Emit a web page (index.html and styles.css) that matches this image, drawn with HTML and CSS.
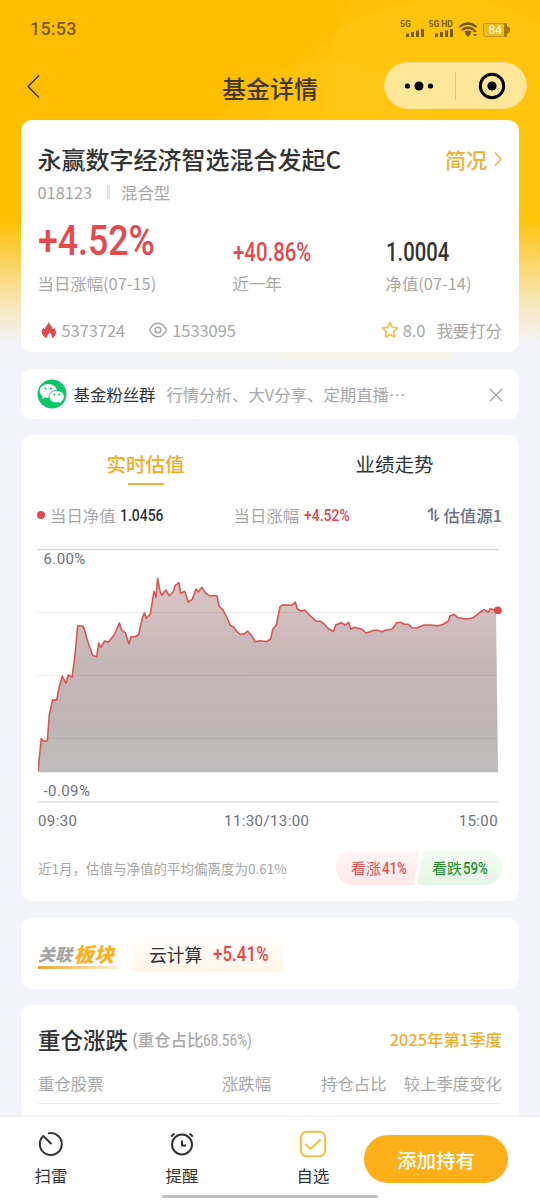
FILE: index.html
```html
<!DOCTYPE html>
<html lang="zh-CN">
<head>
  <meta charset="UTF-8">
  <meta name="viewport" content="width=device-width, initial-scale=1.0">
  <title>基金详情</title>
  <link rel="stylesheet" href="styles.css">
</head>
<body>
  <div class="page">
    <header class="status">
      <span class="clock">15:53</span>
      <svg class="status-icons" width="112" height="24" viewBox="0 0 112 24">
        <g fill="#765a08">
          <text class="net" x="0" y="8.500">5G</text>
          <text class="net" x="28.500" y="8.500">5G HD</text>
          <path d="M6 15.500h3v3.500h-3zM11 14h3v5h-3zM16 12.500h3v6.500h-3zM21 11h3v8h-3zM35 15.500h3v3.500h-3zM40 14h3v5h-3zM45 12.500h3v6.500h-3zM50 11h3v8h-3z"/>
          <path d="M65 15.500l3-2.500 3 2.500-3 3.500z"/>
          <path d="M73 14l2-2.500 2 2.500zM73 16h4l-2 2.500z"/>
          <rect class="battery" x="83.500" y="5.500" width="21" height="13" rx="2"/>
          <path class="battery-end" d="M104 5h2q1 0 1 1.500v1.500l3 2v4l-3 2v1.500q0 1.500-1 1.500h-2z"/>
        </g>
        <path class="wifi" d="M59.500 9q8.500-7 17 0M62 12q6-4.500 12 0M65 14.500q3-2 6 0"/>
        <text class="level" x="88.500" y="16.200">84</text>
      </svg>
    </header>
    <nav class="nav">
      <svg class="back" width="16" height="26" viewBox="0 0 16 26"><path d="M13 2.500L2 13.500l11 11"/></svg>
      <h1>基金详情</h1>
      <div class="capsule">
        <svg width="30" height="12" viewBox="0 0 30 12"><circle cx="3.500" cy="6" r="2.600"/><circle cx="15" cy="6" r="4.500"/><circle cx="26.500" cy="6" r="2.600"/></svg>
        <i></i>
        <svg width="28" height="28" viewBox="0 0 28 28"><circle class="ring" cx="14" cy="14" r="11.700"/><circle cx="14" cy="14" r="4.600"/></svg>
      </div>
    </nav>

    <section class="card fund">
      <div class="fund-title">
        <h2>永赢数字经济智选混合发起C</h2>
        <a>简况<svg width="10" height="16" viewBox="0 0 10 16"><path d="M2 1.500l6 6.500-6 6.500"/></svg></a>
      </div>
      <div class="fund-code"><span>018123</span><i></i><span>混合型</span></div>
      <div class="stats">
        <div><p class="big red"><b class="num">+4.52%</b></p><p>当日涨幅(07-15)</p></div>
        <div><p class="big red"><b class="num mid">+40.86%</b></p><p>近一年</p></div>
        <div><p class="big"><b class="num mid">1.0004</b></p><p>净值(07-14)</p></div>
      </div>
      <div class="counts">
        <svg class="fire" width="16" height="18" viewBox="0 0 16 18"><path d="M7.500.5C8.500 4 12 6 11.700 8.500c.8-.3 1.200-1 1.300-1.800 3 4 2.700 8.500-2.200 10.600.8-2.600-.7-4.800-2.600-6-.1 2-2.600 3.200-1.900 6C-.3 15-.5 9.500 2.800 6.500c0 1 .5 1.500 1.100 1.800C4 5 7.500 4 7.500.5z"/></svg>
        <span class="heat">5373724</span>
        <svg class="eye" width="18" height="16" viewBox="0 0 18 16"><path d="M.8 8C2.500 3.500 5.500 1.200 9 1.200s6.500 2.300 8.200 6.800c-1.700 4.500-4.700 6.800-8.200 6.800S2.500 12.500.8 8z"/><circle cx="9" cy="8" r="2.800"/></svg>
        <span class="views">1533095</span>
        <svg class="star" width="18" height="18" viewBox="0 0 18 18"><path d="M9 1.500l2.300 4.800 5.200.7-3.800 3.700.9 5.300L9 13.500 4.400 16l.9-5.300L1.500 7l5.200-.7z"/></svg>
        <span class="score">8.0</span>
        <span>我要打分</span>
      </div>
    </section>

    <section class="card group">
      <svg width="30" height="30" viewBox="0 0 30 30">
        <circle cx="15" cy="15" r="14.500" fill="#09c767"/>
        <path fill="#fff" d="M11.300 5C6.500 5 2.700 8.100 2.700 12c0 2.200 1.200 4.100 3 5.400l-.7 2.500 3-1.400c3.800 1.100 11-.4 11.900-6.500C19.900 8.100 16.100 5 11.300 5z"/>
        <path fill="#fff" stroke="#09c767" d="M19.800 11.500c-4.300 0-7.800 2.800-7.800 6.200s3.500 6.200 7.800 6.200c.9 0 1.800-.1 2.600-.4l2.700 1.400-.6-2.400c1.700-1.100 2.800-2.900 2.800-4.800 0-3.400-3.300-6.200-7.500-6.200z"/>
        <g fill="#09c767"><circle cx="8.400" cy="9.500" r="1.100"/><circle cx="14" cy="9.500" r="1.100"/><circle cx="17.400" cy="15.600" r="1"/><circle cx="22.200" cy="15.600" r="1"/></g>
      </svg>
      <strong>基金粉丝群</strong>
      <span>行情分析、大V分享、定期直播⋯</span>
      <svg class="close" width="14" height="14" viewBox="0 0 14 14"><path d="M1 1l12 12M13 1L1 13"/></svg>
    </section>

    <section class="card estimate">
      <div class="tabs"><span class="active">实时估值</span><span>业绩走势</span></div>
      <div class="legend">
        <i></i><span>当日净值</span><b class="num small">1.0456</b>
        <span class="rise">当日涨幅</span><b class="num small red">+4.52%</b>
        <a><svg width="13" height="16" viewBox="0 0 13 16"><path d="M1 5l4-3.500V13M8.500 2.500V14L12 10.500"/></svg>估值源1</a>
      </div>
      <svg class="chart" width="466" height="294" viewBox="0 0 466 294">
        <defs>
          <linearGradient id="fill" x1="0" y1="38" x2="0" y2="232" gradientUnits="userSpaceOnUse">
            <stop offset="0" stop-color="#8a4040" stop-opacity=".3"/>
            <stop offset=".45" stop-color="#6d4848" stop-opacity=".4"/>
            <stop offset=".75" stop-color="#6a5454" stop-opacity=".43"/>
            <stop offset="1" stop-color="#616161" stop-opacity=".42"/>
          </linearGradient>
        </defs>
        <path class="grid" d="M0 72.500h460M0 135.500h460M0 198.500h460M0 232.500h460"/>
        <path class="edge" d="M0 9.500h460M0 261.800h460"/>
        <path id="area" fill="url(#fill)"/>
        <polyline id="line"/>
        <circle cx="459.800" cy="70.300" r="3.900" fill="#e5484d"/>
        <text x="5.500" y="24">6.00%</text>
        <text x="5.500" y="255.500">-0.09%</text>
        <text x="0" y="285.500">09:30</text>
        <text x="228.700" y="285.500" text-anchor="middle">11:30/13:00</text>
        <text x="460" y="285.500" text-anchor="end">15:00</text>
      </svg>
      <div class="vote">
        <span>近1月，估值与净值的平均偏离度为0.61%</span>
        <div class="up">看涨<b class="num vote-num">41%</b></div>
        <div class="down">看跌<b class="num vote-num">59%</b></div>
      </div>
    </section>

    <section class="card sector">
      <div class="sector-name"><em>关联</em><em class="hot">板块</em></div>
      <div class="sector-tag">云计算<b class="num sector-num red">+5.41%</b></div>
    </section>

    <section class="card holdings">
      <div class="holdings-title">
        <h3>重仓涨跌</h3>
        <span>(重仓占比<b class="num ratio">68.56%)</b></span>
        <a>2025年第1季度</a>
      </div>
      <div class="holdings-head"><span>重仓股票</span><span>涨跌幅</span><span>持仓占比</span><span>较上季度变化</span></div>
    </section>
  </div>

  <footer class="bottom">
    <div class="item">
      <svg width="28" height="28" viewBox="0 0 28 28"><path d="M11 3.400A11 11 0 1 1 6.300 6L14.500 14"/></svg>
      <span>扫雷</span>
    </div>
    <div class="item">
      <svg width="28" height="28" viewBox="0 0 28 28"><circle cx="14" cy="14.500" r="10"/><path d="M14 10.500v5h4M3.300 6.800q1.200-2 3.200-3.200M24.700 6.800q-1.200-2-3.200-3.200"/></svg>
      <span>提醒</span>
    </div>
    <div class="item">
      <svg class="check" width="28" height="28" viewBox="0 0 28 28"><rect x="1.800" y="1.800" width="24.400" height="24.400" rx="6"/><path d="M6.500 14l5 5 10-9.500"/></svg>
      <span>自选</span>
    </div>
    <button>添加持有</button>
    <i class="home"></i>
  </footer>

  <script>
    const points = [
      [0,231],[3.3,198.5],[5,201],[9.3,201],[11.3,175],[14.7,159.7],[18.7,160],[21.3,146.7],[24.3,136],[28,143.5],
      [30.3,135],[34,137.3],[37,115],[39.7,85.7],[45.3,86.3],[50.3,103.3],[54.7,115.3],[58.7,116.7],[60.7,103],[62.7,107.3],
      [66.7,101],[70.3,102.3],[76.3,94.7],[81.3,83],[83.7,90.3],[87.3,92.7],[91,103.7],[93,96.7],[97,96.7],[100.7,94.7],
      [104,79],[106.3,72.7],[108.3,78.3],[112.3,74],[116,51.3],[118,57.3],[119.7,38.3],[121.7,50],[123.7,55.3],[127.7,50],
      [131.3,55.7],[135,52],[137.3,45.3],[141,42.7],[142.7,53.3],[146.7,51.3],[150.3,62],[154.3,59.3],[158,49],[160.3,52],
      [164,47.3],[167.7,53.3],[171.3,55.7],[179,55.7],[181,66],[185,70],[189.3,78.3],[192.3,85.3],[195.7,87.3],[198.7,91.3],
      [202,94],[206,94],[209.7,91],[213,95],[217.3,101.7],[221.3,100.7],[228.7,101.5],[232.7,99],[234.7,89.3],[238.3,85],
      [242,66.7],[245,64.7],[254,65.3],[257.3,62],[259.3,68.7],[263,71],[267,70],[272,75.7],[278.3,81.3],[282.7,81.3],
      [286.3,84],[290.3,88.7],[295.7,91.3],[297.7,85],[303,82.7],[307.3,85],[310.7,82.3],[312.7,89.3],[316.7,87.3],[324,89.3],
      [328,93],[336,90.3],[339.7,90.3],[343.7,91.7],[347.7,90.3],[354.3,89],[358.7,82.7],[362.3,82.3],[366.3,84.3],[370.3,84.3],
      [374,87.7],[378.7,88],[386,85],[393.3,85],[399.3,86],[405,84.3],[410.3,81.3],[412,76],[416,74.3],[419.7,77.7],
      [428.7,79],[435.3,77.7],[442,72.3],[446.3,69.7],[450.3,72.3],[452.3,68.7],[455.3,69.7],[458,70]
    ];
    document.getElementById('line').setAttribute('points', points.join(' '));
    document.getElementById('area').setAttribute('d', 'M' + points.join('L') + 'L460,232H0Z');
  </script>
</body>
</html>
```

FILE: styles.css
```css
* { box-sizing: border-box; }
body { margin: 0; width: 540px; height: 1200px; overflow: hidden; background: #f3f4fa; color: #333; font: 16.4px/24px "Noto Sans CJK SC", sans-serif; }
h1, h2, h3, p { margin: 0; font-weight: 500; }
svg { display: block; flex: none; }
svg path, svg polyline { stroke-linejoin: round; }
.page {
  height: 1117px; overflow: hidden; padding: 0 21px;
  background:
    linear-gradient(#f5f5e7, #f5f5e7) 283px 352px / 168px 7px no-repeat,
    linear-gradient(#f3f4ef, #f3f4ef) 158px 352px / 125px 7px no-repeat,
    linear-gradient(#f3f4fa00 220px, #f3f4fa66 265px, #f3f4facc 312px, #f3f4fa 346px),
    radial-gradient(circle at 445px 190px, #ffc91c55 191px, transparent 192px),
    radial-gradient(circle at 555px 100px, #ffc91c33 229px, transparent 230px),
    radial-gradient(circle at 330px 190px, #ffc91c33 130px, transparent 131px),
    #ffbf00;
}
.red { color: #e5484d; }

/* narrow figures */
.num { display: inline-block; font-family: Roboto, sans-serif; font-weight: 500; transform-origin: left center; transform: scaleX(.85); white-space: nowrap; }

.status { height: 58px; display: flex; justify-content: space-between; padding: 17px 7px 0 9px; }
.clock { font: 500 18px/24px Roboto, sans-serif; letter-spacing: .2px; color: #765a08; }
.status-icons { margin: 1px 0 0; }
.net { font: bold 8.5px Roboto, sans-serif; }
.level { font: 500 12px Roboto, sans-serif; fill: #fff6d8; }
.wifi { fill: none; stroke: #765a08; stroke-width: 2.2; }
.battery { fill: #f0b91c; stroke: #c09420; }
.battery-end { fill: #a37a0c; }
.nav { height: 62px; display: grid; grid-template-columns: 1fr auto 1fr; align-items: center; margin-right: -8px; padding-bottom: 7px; }
.back { margin-left: 5px; }
.back path { fill: none; stroke: #413413; stroke-width: 1.7; }
.nav h1 { font-size: 24px; line-height: 34px; padding: 4px 8px 0 0; color: #403718; }
.capsule { justify-self: end; width: 143px; height: 47px; border-radius: 24px; background: #ffe799; border: 1px solid #f8dd86; display: flex; align-items: center; padding: 0 19px; }
.capsule i { width: 1px; height: 28px; margin: 0 22px 0 21px; background: #dcc583; }
.ring { fill: none; stroke: #000; stroke-width: 3; }

.card { background: #fff; border-radius: 11px; margin-bottom: 16px; padding: 0 17px; }
.fund { height: 232px; margin-bottom: 17px; padding: 21px 17px 0 16.500px; color: #a7a7a7; }
.fund-title { display: flex; justify-content: space-between; line-height: 36px; }
.fund-title h2 { font-size: 24px; color: #333; white-space: nowrap; }
.fund-title a { display: flex; align-items: center; gap: 6px; font-size: 21px; font-weight: 500; color: #f0ae35; height: 35px; margin-right: -1px; }
.fund-title path { fill: none; stroke: #f0ae35; stroke-width: 1.3; }
.fund-code { display: flex; align-items: center; height: 24px; margin-top: 3px; }
.fund-code i { width: 3px; height: 14px; background: #e2e2e2; margin: 0 11px 0 15px; }
.stats { display: grid; grid-template-columns: 195px 153px 1fr; margin-top: 15px; white-space: nowrap; }
.stats p { font-weight: 400; }
.big { height: 52px; display: flex; align-items: flex-end; }
.big .num { font-size: 42px; line-height: 60px; }
.big .num.mid { font-size: 25px; line-height: 36px; transform: scaleX(.815); }
.stats > div:last-child .big { color: #333; }
.stats > div:last-child .num { transform: scaleX(.81); }
.counts { display: flex; align-items: center; margin-top: 23px; height: 24px; }
.fire { fill: #e5484d; margin: 0 5px 0 3px; }
.heat { margin-right: 24px; }
.eye { fill: none; stroke: #a7a7a7; stroke-width: 1.5; margin-right: 5px; }
.star { fill: none; stroke: #f7bd3d; stroke-width: 1.5; margin: 0 4px 0 auto; }
.score { margin-right: 11px; }

.group { height: 50px; display: flex; align-items: center; padding-left: 16px; }
.group strong { font-weight: 400; margin: 0 11px 0 6.500px; }
.group span { color: #a7a7a7; }
.close { margin: 2px -1px 0 auto; }
.close path { stroke: #a0a0a0; stroke-width: 1.2; }

.estimate { height: 466px; margin-bottom: 17px; padding-top: 13px; }
.tabs { display: grid; grid-template-columns: 1fr 1fr; margin: 0 -17px; text-align: center; font-size: 19.5px; line-height: 32px; height: 54px; }
.active { color: #f5ab23; font-weight: 500; }
.active::after { content: ""; display: block; width: 36px; height: 2px; background: #efb13b; margin: 3px auto 0; }
.legend { display: flex; align-items: center; height: 25px; margin-left: -1px; color: #a7a7a7; white-space: nowrap; }
.legend i { width: 8px; height: 8px; border-radius: 50%; background: #e5484d; margin-right: 5px; }
.legend .small { font-size: 17px; width: 46px; margin-left: 4px; transform: scaleX(.82); }
.legend .small:not(.red) { color: #333; }
.legend .small.red { margin-left: 5px; transform: scaleX(.82); }
.rise { margin-left: 68px; }
.legend a { display: flex; align-items: center; gap: 3px; margin-left: auto; color: #6d7386; font-weight: 500; }
.legend path { fill: none; stroke: #6d7386; stroke-width: 1.7; }
.chart { margin-top: 13px; }
.chart text { font: 15px Roboto, sans-serif; letter-spacing: .4px; fill: #6e7280; }
.grid { stroke: #ebebeb; }
.edge { stroke: #d8d8d8; stroke-width: 1.3; }
#line { fill: none; stroke: #d95555; stroke-width: 1.6; }
.vote { display: flex; align-items: center; height: 34px; margin-top: 17px; font-size: 13.5px; color: #a7a7a7; white-space: nowrap; }
.up, .down { width: 83px; height: 34px; font-size: 15px; display: flex; align-items: center; }
.up { margin-left: auto; padding-left: 15px; color: #dc5558; background: linear-gradient(#fff6f6, #ffe8e8); border-radius: 17px 3px 3px 17px; clip-path: polygon(0 0, 100% 0, 78px 100%, 0 100%); }
.down { width: 85px; margin-left: -2px; padding-left: 15px; color: #24912a; background: linear-gradient(#f4fbf4, #e5f4e6); border-radius: 3px 17px 17px 3px; clip-path: polygon(6px 0, 100% 0, 100% 100%, 0 100%); }
.vote-num { font-size: 17px; width: 30px; margin-left: 1px; transform: scaleX(.78); }

.sector { height: 71px; display: flex; align-items: center; }
.sector-name { width: 80px; height: 26px; margin: 4px 14px 0 0; display: flex; align-items: center; font-weight: 900; line-height: 22px; border-bottom: 3px solid; border-image: linear-gradient(90deg, #e9a52e, #fff3dc) 1; }
.sector-name em { font-size: 17px; color: #a5a5a5; }
.sector-name .hot { font-size: 20px; color: #f9b11e; margin-left: 2px; }
.sector-tag { width: 152px; height: 37px; padding-left: 17px; display: flex; align-items: center; font-size: 17.8px; background: linear-gradient(#fff, #fff6e6); border-radius: 5px; white-space: nowrap; }
.sector-num { font-size: 20px; margin-left: 11px; }

.holdings { height: 130px; padding-top: 17px; }
.holdings-title { display: flex; align-items: center; height: 34px; white-space: nowrap; }
.holdings-title h3 { font-size: 22.5px; }
.holdings-title span { margin-left: 4px; color: #a7a7a7; font-weight: 500; }
.ratio { font-size: 17px; font-weight: 400; transform: scaleX(.8); }
.holdings-title a { color: #f5ab2e; font-weight: 500; margin-left: auto; }
.holdings-head { display: flex; height: 48px; border-bottom: 1px solid #edeef4; line-height: 55px; color: #a7a7a7; }
.holdings-head span:nth-child(2) { margin: 0 50px 0 auto; }
.holdings-head span:nth-child(4) { margin-left: 17px; }

.bottom { position: relative; height: 83px; background: #fff; display: flex; padding: 0 31px 0 18px; box-shadow: 0 -1px 2px #e9eaf0; }
.item { width: 66px; margin-right: 65px; display: flex; flex-direction: column; align-items: center; padding-top: 13px; line-height: 34px; }
.item svg { fill: none; stroke: #333; stroke-width: 2; }
.item .check { stroke: #f6c044; }
.item:nth-child(3) { margin-right: 18px; }
.bottom button { width: 144px; height: 48px; margin-top: 18px; padding: 0; border: 0; border-radius: 24px; background: #fdb019; color: #fff; font: 500 19.5px "Noto Sans CJK SC", sans-serif; }
.home { position: absolute; left: 162px; bottom: 2px; width: 216px; height: 3px; border-radius: 2px; background: #c0c0c0; }
```
